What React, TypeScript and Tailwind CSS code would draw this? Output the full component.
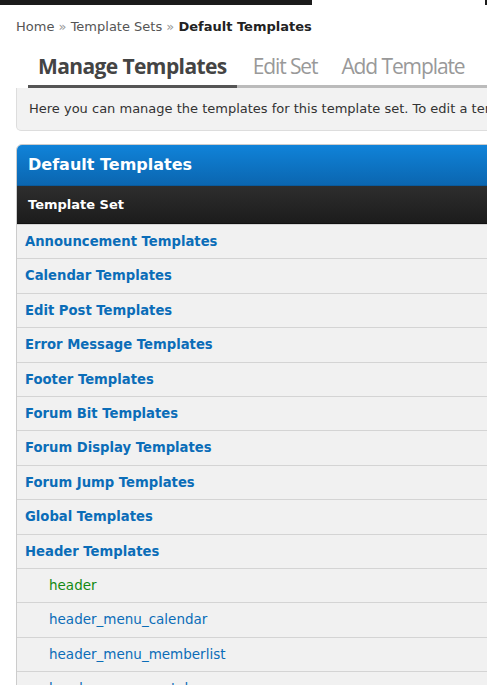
import React from 'react'

const groups = [
  'Announcement Templates',
  'Calendar Templates',
  'Edit Post Templates',
  'Error Message Templates',
  'Footer Templates',
  'Forum Bit Templates',
  'Forum Display Templates',
  'Forum Jump Templates',
  'Global Templates',
  'Header Templates',
]

const headerItems = [
  { name: 'header', modified: true },
  { name: 'header_menu_calendar', modified: false },
  { name: 'header_menu_memberlist', modified: false },
  { name: 'header_menu_portal', modified: false },
]

const sans = "font-['DejaVu_Sans',Verdana,sans-serif]"

export default function App() {
  return (
    <div className={`h-[685px] w-full overflow-hidden bg-white ${sans}`}>
      <div className="w-[820px]">
        <div className="flex h-[5px]">
          <div className="w-[312px] bg-[#1b1b1b]" />
          <div className="w-[173px]" />
          <div className="w-[3px] bg-[#1b1b1b]" />
        </div>

        <div className="px-4">
          <div className="pt-[14px] text-[13px] leading-4 text-[#555]">
            Home <span className="text-[#999]">»</span> Template Sets <span className="text-[#999]">»</span>{' '}
            <b className="text-[#222]">Default Templates</b>
          </div>

          {/* tabs */}
          <div className="ml-3 mt-[16px] flex border-b-[3px] border-[#bbb] font-['Open_Sans',sans-serif] text-[21px] leading-[30px]">
            <span className="-mb-[3px] border-b-[3px] border-[#555] px-[10px] pb-[4px] font-bold tracking-[-0.6px] text-[#444]">
              Manage Templates
            </span>
            <span className="pl-[16px] pr-[12px] pb-[4px] tracking-[-1.1px] text-[#999]">Edit Set</span>
            <span className="px-[12px] pb-[4px] tracking-[-1.1px] text-[#999]">Add Template</span>
          </div>

          <div className="rounded-bl-[5px] border border-t-0 border-[#ddd] bg-[#f2f2f2] px-3 py-[13px] text-[13px] leading-4 text-[#333]">
            Here you can manage the templates for this template set. To edit a template, click on its name.
          </div>

          {/* table */}
          <div className="mt-[13px] overflow-hidden rounded-tl-[6px] border border-[#ccc]">
            <div className="border-b border-[#0a5a9c] bg-gradient-to-b from-[#1083d9] to-[#0b66b0] px-[11px] py-[10px] text-[16px] font-bold leading-5 text-white">
              Default Templates
            </div>
            <div className="border-b border-[#111] bg-gradient-to-b from-[#2e2e2e] to-[#1c1c1c] px-[11px] py-[10px] text-[13px] font-bold leading-[17px] text-white">
              Template Set
            </div>
            {groups.map((g) => (
              <div
                key={g}
                className="h-[34.4px] border-t border-[#d4d4d4] bg-[#f1f1f1] px-[8px] pt-[8px] text-[13.2px] font-bold leading-[17px] text-[#0b6db8] first:border-t-0"
              >
                {g}
              </div>
            ))}
            {headerItems.map((t) => (
              <div
                key={t.name}
                className={`h-[34.4px] border-t border-[#d4d4d4] bg-[#f1f1f1] pl-[32px] pt-[8px] text-[13.5px] leading-[17px] ${
                  t.modified ? 'text-[#138a13]' : 'text-[#0b6db8]'
                }`}
              >
                {t.name}
              </div>
            ))}
          </div>
        </div>
      </div>
    </div>
  )
}
